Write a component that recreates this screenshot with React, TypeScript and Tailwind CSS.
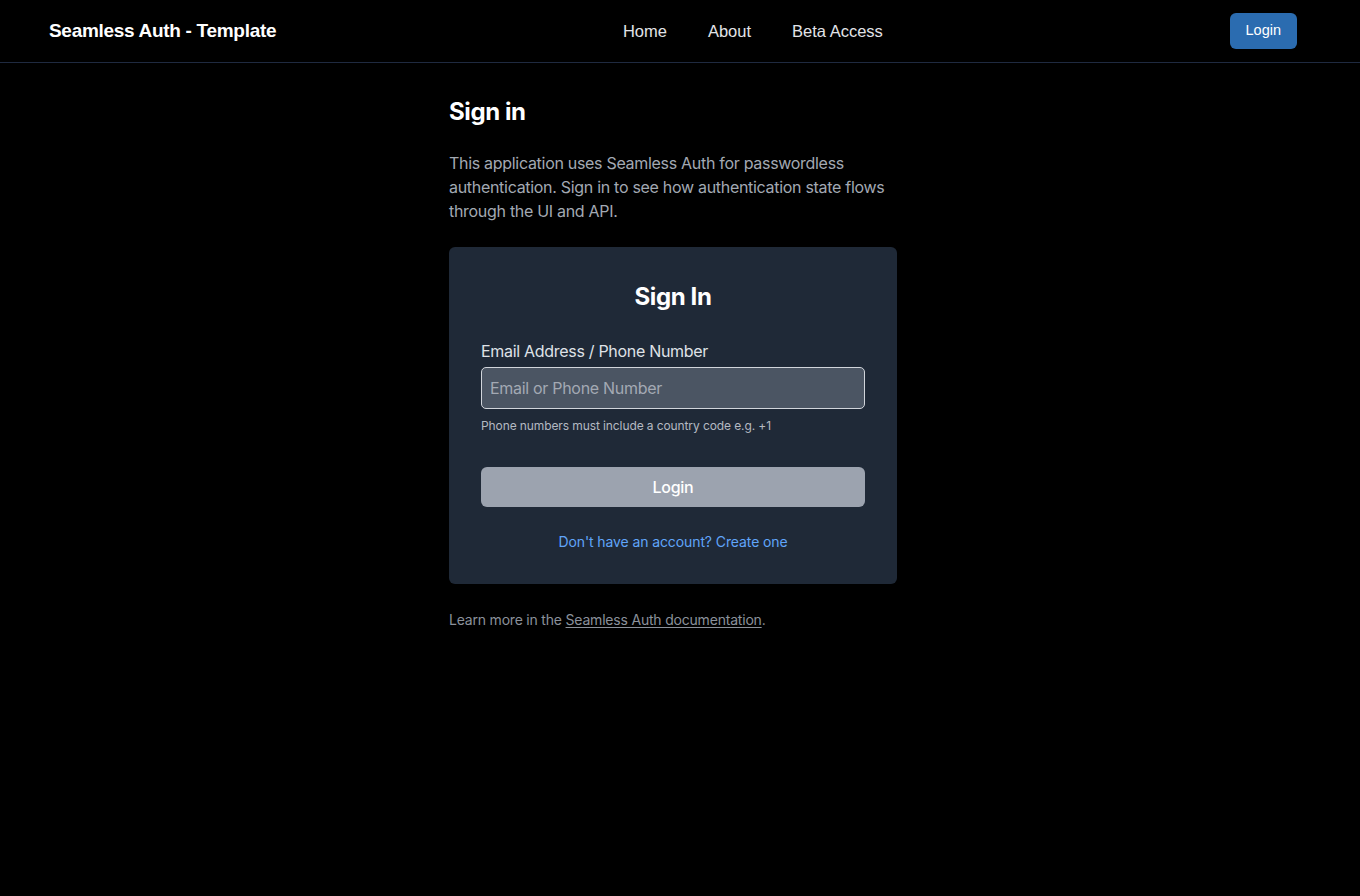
import { useState } from "react";

const navLinks = ["Home", "About", "Beta Access"];

export default function App() {
  const [identifier, setIdentifier] = useState("");

  return (
    <div className="min-h-screen bg-black">
      {/* Top bar */}
      <header className="h-[63px] border-b border-[#1f2a40] flex items-center justify-between pl-[49px] pr-[63px] font-['Liberation_Sans',Arial,sans-serif]">
        <span className="text-white font-bold text-[19px] tracking-[-0.3px]">
          Seamless Auth - Template
        </span>
        <nav className="flex items-center gap-[41px]">
          {navLinks.map((l) => (
            <a key={l} href="#" className="text-[16.5px] text-[#e2e4e8] font-medium">
              {l}
            </a>
          ))}
        </nav>
        <button className="h-9 px-4 rounded-md bg-[#2b6cb0] text-white text-[14.5px]">
          Login
        </button>
      </header>

      <main className="flex justify-center pr-[14px] font-['Inter','Noto_Sans',sans-serif] tracking-[-0.3px]">
        <div className="w-[448px] pt-[33px]">
          <h1 className="text-white text-2xl font-bold tracking-[-0.4px]">Sign in</h1>
          <p className="mt-[23px] text-[#a3a9b3] text-base leading-6">
            This application uses Seamless Auth for passwordless authentication. Sign in to see
            how authentication state flows through the UI and API.
          </p>

          {/* Sign-in card */}
          <div className="mt-6 bg-[#1f2937] rounded-md px-8 pt-[34px] pb-[31px]">
            <h2 className="text-center text-white text-2xl font-bold tracking-[-0.4px]">
              Sign In
            </h2>
            <label className="block mt-[26px] text-[#dfe2e7] text-base font-normal tracking-[-0.3px]">
              Email Address / Phone Number
            </label>
            <input
              value={identifier}
              onChange={(e) => setIdentifier(e.target.value)}
              placeholder="Email or Phone Number"
              className="mt-[4px] w-full h-[42px] px-2 rounded-[5px] bg-[#4b5563] border border-[#d1d5db] text-white text-base placeholder:text-[#a3a9b3] outline-none"
            />
            <p className="mt-[9px] text-xs text-[#b4b9c2] tracking-[-0.1px]">
              Phone numbers must include a country code e.g. +1
            </p>
            <button className="mt-[33px] w-full h-10 rounded-md bg-[#9ca3af] text-white text-base font-medium">
              Login
            </button>
            <div className="mt-[22px] text-center">
              <a href="#" className="text-sm text-[#60a5fa] tracking-[-0.1px]">
                Don't have an account? Create one
              </a>
            </div>
          </div>

          <p className="mt-[26px] text-sm text-[#8b919b] tracking-[-0.2px]">
            Learn more in the{" "}
            <a href="#" className="underline underline-offset-2">
              Seamless Auth documentation
            </a>
            .
          </p>
        </div>
      </main>
    </div>
  );
}
